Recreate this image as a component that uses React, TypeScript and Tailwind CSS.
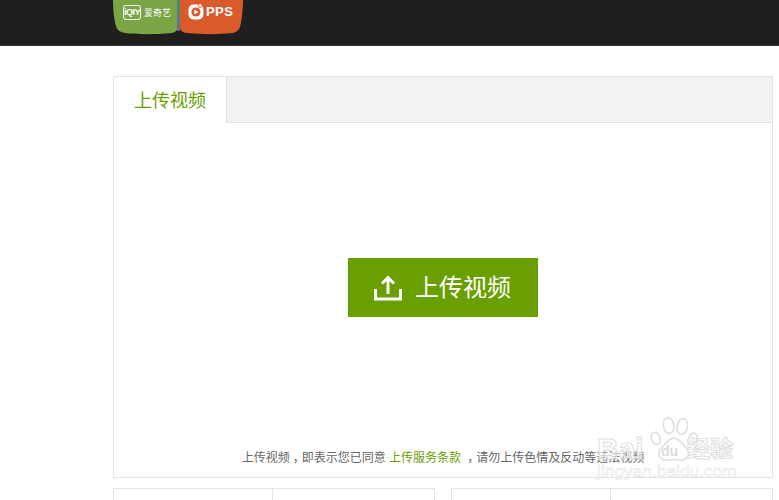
const cjk = "font-['Liberation_Sans','Noto_Sans_CJK_SC',sans-serif]";

function LogoTabs() {
  return (
    <div className="relative flex h-[35px] w-[130px]">
      {/* green iqiyi tab */}
      <div className="relative h-[35px] w-[66px]">
        <svg width="68" height="35" viewBox="0 0 68 35" className="absolute left-[-1px] top-0">
          <path d="M0 0H67C67 8 66.500 22 65 28C64 31 61 33 57 33.300C42 34.500 22 34.500 12 33C7 32 4 30 3 26C1 20 0 8 0 0Z" fill="#7aa545" />
        </svg>
        <div className="absolute left-[9px] top-[5px] flex items-center gap-[3px] text-white">
          <span className="flex h-[15px] w-[18px] items-center justify-center rounded-[3px] border border-white text-[9px] font-bold leading-none tracking-[-0.5px] font-['Liberation_Sans',sans-serif]">
            iQIY
          </span>
          <span className={`text-[9px] leading-[14px] ${cjk}`}>爱奇艺</span>
        </div>
      </div>
      {/* orange pps tab */}
      <div className="relative -ml-[3px] h-[35px] w-[67px]">
        <svg width="67" height="35" viewBox="0 0 67 35" className="absolute left-0 top-0">
          <path d="M1 0H66C66 8 65 18 63.500 25C62.500 30 60 32 56 33C43 34.500 25 34.500 10 33C6 32.500 3 31 2.500 27C2 20 1.500 8 1 0Z" fill="#d95b2b" />
        </svg>
        <svg width="17" height="17" viewBox="0 0 16 16" className="absolute left-[11px] top-[3px]">
          <rect x="0.500" y="1.500" width="14" height="14" rx="4.500" fill="#fff" />
          <circle cx="11.500" cy="2.500" r="1.800" fill="#fff" stroke="#d95b2b" strokeWidth="0.800" />
          <circle cx="7.500" cy="8.500" r="4.300" fill="#d95b2b" />
          <path d="M6 6.300L10 8.500L6 10.700Z" fill="#fff" />
        </svg>
        <span className="absolute left-[29px] top-[4px] text-[13px] font-bold leading-[16px] tracking-[0.4px] text-white font-['Liberation_Sans',sans-serif]">
          PPS
        </span>
      </div>
      <div className="absolute left-[63px] top-0 h-[31px] w-[3px] bg-gradient-to-b from-[#3f8f6f] to-[#6a6a9a]" />
    </div>
  );
}

function Watermark() {
  return (
    <div className="pointer-events-none absolute left-[597px] top-[415px] h-[70px] w-[145px]">
      <svg width="56" height="50" viewBox="0 0 70 62" className="absolute left-[50px] top-0" fill="none" stroke="#dedede" strokeWidth="2">
        <ellipse cx="11" cy="29" rx="5.500" ry="8" transform="rotate(-20 11 29)" />
        <ellipse cx="27" cy="13" rx="6.500" ry="10" transform="rotate(-8 27 13)" />
        <ellipse cx="44" cy="14" rx="6.500" ry="10" transform="rotate(10 44 14)" />
        <ellipse cx="57" cy="30" rx="5.500" ry="8" transform="rotate(25 57 30)" />
        <path d="M34 29C42 29 44 37 49 41C56 47 50 58 40 56C35 55 32 55 27 56C16 58 11 48 18 41C24 36 26 29 34 29Z" />
      </svg>
      <span className="absolute left-0 top-[19px] text-[30px] font-bold leading-[30px] text-white/60 [-webkit-text-stroke:1px_#dedede] font-['Liberation_Sans',sans-serif]">
        Bai
      </span>
      <span className="absolute left-[64px] top-[27px] text-[14px] font-bold leading-[18px] text-[#dcdcdc] font-['Liberation_Sans',sans-serif]">
        du
      </span>
      <span className={`absolute left-[90px] top-[21px] text-[23px] font-bold leading-[26px] text-white/60 [-webkit-text-stroke:1px_#dedede] ${cjk}`}>
        经验
      </span>
      <span className="absolute left-0 top-[47px] text-[17px] leading-[20px] tracking-[0.15px] text-white/60 [-webkit-text-stroke:0.5px_#e2e2e2] font-['Liberation_Sans',sans-serif]">
        jingyan.baidu.com
      </span>
    </div>
  );
}

function Comma() {
  return <span className="inline-block w-[12px] text-center [font-feature-settings:'halt']">，</span>;
}

export default function App() {
  return (
    <div className={`relative h-[500px] w-[779px] overflow-hidden bg-white ${cjk}`}>
      <header className="h-[46px] border-b border-[#3a3a3a] bg-[#1f1f1f] pl-[114px]">
        <LogoTabs />
      </header>

      <main className="ml-[113px] mt-[30px] w-[660px]">
        <section className="flex h-[402px] flex-col border border-[#e3e3e3]">
          <div className="flex h-[46px] bg-[#f2f2f2]">
            <div className="flex w-[113px] items-center justify-center border-r border-[#e3e3e3] bg-white pt-[3px] text-[18px] text-[#699f00]">
              上传视频
            </div>
            <div className="flex-1 border-b border-[#e3e3e3]" />
          </div>

          <div className="flex flex-1 flex-col items-center">
            <button className="ml-[-1px] mt-[135px] flex h-[59px] w-[190px] items-center justify-center gap-[13px] bg-[#699f00] text-[24px] text-white">
              <svg width="28" height="26" viewBox="0 0 28 26" fill="none" stroke="currentColor" strokeWidth="3">
                <path d="M1.500 14V24H26.500V14" />
                <path d="M14 19V3" />
                <path d="M8 8.500L14 2.500L20 8.500" />
              </svg>
              <span>上传视频</span>
            </button>
            <p className="mt-[132px] whitespace-nowrap text-[12px] leading-[18px] text-[#666]">
              上传视频<Comma />即表示您已同意 <a className="text-[#699f00]">上传服务条款</a> <Comma />请勿上传色情及反动等违法视频
            </p>
          </div>
        </section>

        <div className="mt-[10px] grid grid-cols-2 gap-[16px]">
          <div className="flex h-[40px] border border-[#e3e3e3]">
            <div className="w-[159px] border-r border-[#e3e3e3]" />
          </div>
          <div className="flex h-[40px] border border-[#e3e3e3]">
            <div className="w-[159px] border-r border-[#e3e3e3]" />
          </div>
        </div>
      </main>

      <Watermark />
    </div>
  );
}
